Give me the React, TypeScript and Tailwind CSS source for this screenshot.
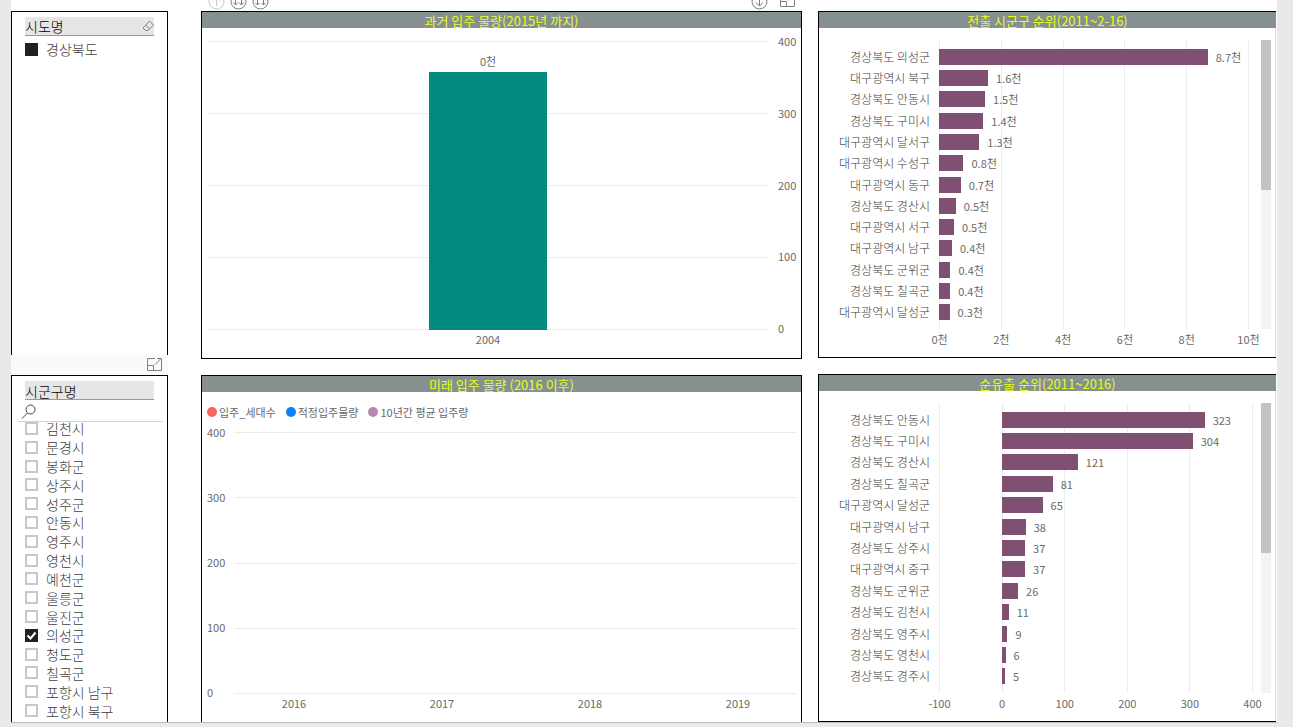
import type { ReactNode } from 'react';

type Bar = { name: string; value: number; label: string };

const cities = [
    "김천시", "문경시", "봉화군", "상주시", "성주군", "안동시", "영주시", "영천시",
    "예천군", "울릉군", "울진군", "의성군", "청도군", "칠곡군", "포항시 남구", "포항시 북구"
];

const outflow: Bar[] = [
    { name: "경상북도 의성군", value: 8.67, label: "8.7천" },
    { name: "대구광역시 북구", value: 1.58, label: "1.6천" },
    { name: "경상북도 안동시", value: 1.48, label: "1.5천" },
    { name: "경상북도 구미시", value: 1.43, label: "1.4천" },
    { name: "대구광역시 달서구", value: 1.3, label: "1.3천" },
    { name: "대구광역시 수성구", value: 0.79, label: "0.8천" },
    { name: "대구광역시 동구", value: 0.7, label: "0.7천" },
    { name: "경상북도 경산시", value: 0.54, label: "0.5천" },
    { name: "대구광역시 서구", value: 0.48, label: "0.5천" },
    { name: "대구광역시 남구", value: 0.42, label: "0.4천" },
    { name: "경상북도 군위군", value: 0.37, label: "0.4천" },
    { name: "경상북도 칠곡군", value: 0.36, label: "0.4천" },
    { name: "대구광역시 달성군", value: 0.34, label: "0.3천" }
];

const netOutflow: Bar[] = [
    { name: "경상북도 안동시", value: 323, label: "323" },
    { name: "경상북도 구미시", value: 304, label: "304" },
    { name: "경상북도 경산시", value: 121, label: "121" },
    { name: "경상북도 칠곡군", value: 81, label: "81" },
    { name: "대구광역시 달성군", value: 65, label: "65" },
    { name: "대구광역시 남구", value: 38, label: "38" },
    { name: "경상북도 상주시", value: 37, label: "37" },
    { name: "대구광역시 중구", value: 37, label: "37" },
    { name: "경상북도 군위군", value: 26, label: "26" },
    { name: "경상북도 김천시", value: 11, label: "11" },
    { name: "경상북도 영주시", value: 9, label: "9" },
    { name: "경상북도 영천시", value: 6, label: "6" },
    { name: "경상북도 경주시", value: 5, label: "5" }
];

const legend = [
    { name: "입주_세대수", color: "bg-[#fd625e]" },
    { name: "적정입주물량", color: "bg-[#0a80ff]" },
    { name: "10년간 평균 입주량", color: "bg-[#b887ad]" }
];

const ticks = [400, 300, 200, 100, 0];

const CircleIcon = ({ d, label, faded }: { d: string; label: string; faded?: boolean }) => (
    <button type="button" aria-label={label} className={faded ? "text-[#c8c8c8]" : "text-[#7a7a7a]"}>
        <svg width="17" height="17" viewBox="0 0 17 17" fill="none" stroke="currentColor">
            <circle cx="8.5" cy="8.5" r="7.5" />
            <path d={d} />
        </svg>
    </button>
);

const FocusIcon = () => (
    <button type="button" aria-label="포커스 모드" className="text-[#808080]">
        <svg width="15" height="13" viewBox="0 0 15 13" fill="none" stroke="currentColor">
            <path d="M8 .5H.5v12h14V5M.5 7.5h6v5M8 6.5l6-6M10 .5h4.5V5" />
        </svg>
    </button>
);

const PanelTitle = ({ children }: { children: ReactNode }) => (
    <h2 className="h-4 bg-[#869091] text-center text-[13px] leading-[18px] text-[#e4ff1a]">{children}</h2>
);

const Checkbox = ({ name, checked }: { name: string; checked?: boolean }) => (
    <label className="flex items-center gap-2 text-sm leading-4">
        <span className="relative flex">
            <input
                type="checkbox"
                defaultChecked={checked}
                className="peer size-[13px] appearance-none border-2 border-[#c8c8c8] bg-white checked:border-[#212121] checked:bg-[#212121]"
            />
            <svg viewBox="0 0 13 13" fill="none" stroke="white" strokeWidth="2" className="pointer-events-none absolute inset-0 hidden size-[13px] peer-checked:block">
                <path d="M2.5 6.5l3 3 5-6" />
            </svg>
        </span>
        {name}
    </label>
);

const RowLines = () => (
    <div className="absolute inset-0 flex flex-col justify-between">
        {ticks.map((t) => <div key={t} className="h-px bg-[#ebebeb]" />)}
    </div>
);

const ValueAxis = () => (
    <div className="flex flex-col justify-between">
        {ticks.map((t) => (
            <span key={t} className="flex h-px items-center pb-0.5 text-[11px] leading-4">{t}</span>
        ))}
    </div>
);

const RankChart = ({ title, bars, min, max, axis, plot, axisPad }: {
    title: string; bars: Bar[]; min: number; max: number; axis: string[]; plot: string; axisPad: string;
}) => {
    const span = max - min;

    return (
        <section className="border-y border-l border-black bg-white">
            <PanelTitle>{title}</PanelTitle>
            <div className="border-r border-[#dcdcdc]">
                <div className={`flex pt-3 pr-1 ${plot}`}>
                    <ul className="flex w-[111px] flex-col py-1.5 text-right text-xs font-light whitespace-nowrap text-[#404040]">
                        {bars.map((b) => (
                            <li key={b.name} className="flex flex-1 items-center justify-end">{b.name}</li>
                        ))}
                    </ul>
                    <div className="relative ml-[9px] flex-1 py-1.5">
                        <div className="absolute inset-0 flex justify-between">
                            {axis.map((a) => <div key={a} className="w-px bg-[#ebebeb]" />)}
                        </div>
                        <div className="relative flex h-full flex-col">
                            {bars.map((b) => (
                                <div key={b.name} className="flex flex-1 items-center">
                                    <div className="shrink-0" style={{ width: `${(-min / span) * 100}%` }} />
                                    <div className="h-4 shrink-0 bg-[#7f5072]" style={{ width: `${(b.value / span) * 100}%` }} />
                                    <span className="ml-2 text-[11px] leading-4 whitespace-nowrap">{b.label}</span>
                                </div>
                            ))}
                        </div>
                    </div>
                    <div className={`flex justify-end ${axisPad}`}>
                        <div className="w-2.5 bg-[#f3f3f3]">
                            <div className="h-[150px] bg-[#c3c3c3]" />
                        </div>
                    </div>
                </div>
                <div className="flex h-7 pt-0.5 pr-1 pl-[120px] text-[11px] leading-4">
                    <div className="flex flex-1 justify-between">
                        {axis.map((a) => (
                            <span key={a} className="flex w-px justify-center whitespace-nowrap">{a}</span>
                        ))}
                    </div>
                    <div className={axisPad} />
                </div>
            </div>
        </section>
    );
};

const PastSupply = () => (
    <section className="border border-black bg-white">
        <PanelTitle>과거 입주 물량(2015년 까지)</PanelTitle>
        <div className="flex h-[302px] pt-[13px] pr-1 pl-[5px]">
            <div className="relative flex-1">
                <RowLines />
                <div className="relative flex h-full flex-col items-center justify-end">
                    <span className="mb-[3px] text-[11px] leading-4">0천</span>
                    <div className="w-[21%] bg-[#018a80]" style={{ height: `${(357 / 400) * 100}%` }} />
                </div>
            </div>
            <div className="ml-[9px] flex w-[19px]"><ValueAxis /></div>
        </div>
        <div className="flex h-7 justify-center pt-px pr-8 pl-[5px] text-[11px] leading-4">2004</div>
    </section>
);

const FutureSupply = () => (
    <section className="flex-1 overflow-hidden border-x border-t border-black bg-white">
        <PanelTitle>미래 입주 물량 (2016 이후)</PanelTitle>
        <ul className="flex h-10 items-center gap-2.5 pl-[5px] text-[11px] whitespace-nowrap">
            {legend.map((l) => (
                <li key={l.name} className="flex items-center gap-0.5">
                    <span className={`size-2.5 rounded-full ${l.color}`} />
                    {l.name}
                </li>
            ))}
        </ul>
        <div className="flex h-[262px] pr-1 pl-[5px]">
            <div className="flex w-[27px]"><ValueAxis /></div>
            <div className="relative flex-1"><RowLines /></div>
        </div>
        <div className="-mr-[11px] flex h-[27px] pt-px pl-[18px] text-center text-[11px] leading-4">
            {[2016, 2017, 2018, 2019].map((y) => <span key={y} className="flex-1">{y}</span>)}
        </div>
    </section>
);

const App = () => (
    <main className="min-h-screen bg-[#e9e9e9] pr-4 pl-[11px] font-['Noto_Sans_CJK_KR',sans-serif] text-[#6a6a6a]">
        <div className="flex overflow-hidden border-b border-[#bdbdbd] bg-white pr-px">
            <aside className="flex w-[157px] shrink-0 flex-col pt-[11px]">
                <section className="h-[344px] border-x border-t border-black px-3 pt-[5px]">
                    <div className="mx-px flex h-[19px] items-center justify-between border-b border-[#999] bg-[#e6e6e6]">
                        <h2 className="text-sm font-light text-black">시도명</h2>
                        <button type="button" aria-label="선택 지우기" className="text-[#808080]">
                            <svg width="12" height="12" viewBox="0 0 12 12" fill="none" stroke="currentColor">
                                <path d="M7.5 1L11.5 5 6 10.5H3.5L1 8zM3.5 5l4 4" />
                            </svg>
                        </button>
                    </div>
                    <label className="mt-[5px] ml-px flex items-center gap-2 text-sm leading-4 font-light text-[#404040]">
                        <input type="checkbox" className="size-[13px] appearance-none bg-[#212121]" />
                        경상북도
                    </label>
                </section>
                <div className="flex h-5 items-center justify-end bg-[#fafafa] pr-1.5 pb-0.5">
                    <FocusIcon />
                </div>
                <section className="flex-1 border-x border-t border-black bg-white">
                    <h2 className="mx-[13px] mt-[5px] h-[19px] border-b border-[#999] bg-[#e6e6e6] text-sm leading-5 font-light text-black">시군구명</h2>
                    <label className="mr-1 ml-1.5 flex h-[22px] items-center border-b border-[#d4d4d4] pt-0.5 pl-[3px]">
                        <svg width="15" height="15" viewBox="0 0 15 15" fill="none" stroke="#444" className="shrink-0">
                            <circle cx="9.5" cy="5.5" r="4.5" />
                            <path d="M6.5 9L1 14.5" />
                        </svg>
                        <input type="text" aria-label="검색" className="w-full min-w-0 text-sm outline-none" />
                    </label>
                    <div className="flex h-[298px] flex-col justify-end overflow-hidden pl-[13px] font-light text-[#404040]">
                        <ul className="flex h-[301px] shrink-0 flex-col">
                            {cities.map((c) => (
                                <li key={c} className="flex flex-1 items-center">
                                    <Checkbox name={c} checked={c === "의성군"} />
                                </li>
                            ))}
                        </ul>
                    </div>
                </section>
            </aside>

            <div className="ml-[33px] flex min-w-0 flex-[601] flex-col">
                <div className="flex h-[11px] items-end justify-between overflow-hidden px-[7px] pb-px">
                    <div className="flex gap-[5px]">
                        <CircleIcon faded label="드릴업" d="M8.5 13V4M5 7.5L8.5 4 12 7.5" />
                        <CircleIcon label="다음 수준으로 이동" d="M5.5 4v7.5M11.5 4v7.5M3 9.5l2.5 2.5L8 9.5M9 9.5l2.5 2.5L14 9.5" />
                        <CircleIcon label="모두 확장" d="M5.5 4v8M11.5 4v8M3.5 10l2 2 2-2M9.5 10l2 2 2-2" />
                    </div>
                    <div className="flex items-end gap-3">
                        <CircleIcon label="드릴다운" d="M8.5 3v10M5 9.5l3.5 3.5L12 9.5" />
                        <span className="flex pb-[3px]"><FocusIcon /></span>
                    </div>
                </div>
                <PastSupply />
                <div className="h-4" />
                <FutureSupply />
            </div>

            <div className="ml-4 flex min-w-0 flex-[458] flex-col gap-4 pt-[11px]">
                <RankChart
                    title="전출 시군구 순위(2011~2-16)" bars={outflow} min={0} max={10}
                    axis={["0천", "2천", "4천", "6천", "8천", "10천"]} plot="h-[301px]" axisPad="w-[22px]"
                />
                <RankChart
                    title="순유출 순위(2011~2016)" bars={netOutflow} min={-100} max={400}
                    axis={["-100", "0", "100", "200", "300", "400"]} plot="h-[302px]" axisPad="w-[18px]"
                />
            </div>
        </div>
    </main>
);

export default App;
